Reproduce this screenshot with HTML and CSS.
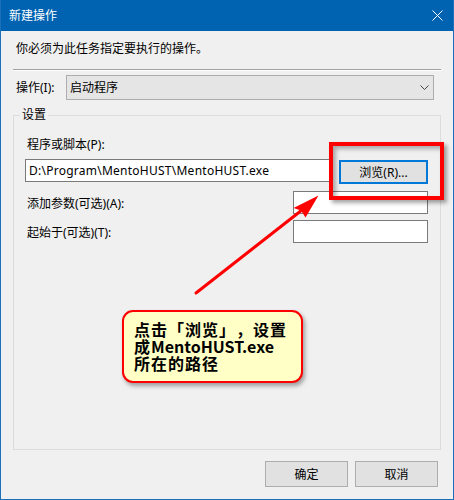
FILE: index.html
```html
<!DOCTYPE html>
<html lang="zh-CN">
<head>
<meta charset="utf-8">
<title>新建操作</title>
<link rel="stylesheet" href="styles.css">
</head>
<body>
<div class="window">
  <div class="titlebar">
    <span class="title">新建操作</span>
    <svg class="close" width="11" height="11" viewBox="0 0 11 11"><path d="M0.5 0.5L10.5 10.5M10.5 0.5L0.5 10.5" stroke="#fff" stroke-width="1" fill="none"/></svg>
  </div>
  <div class="content">
    <p class="desc">你必须为此任务指定要执行的操作。</p>
    <div class="sep"></div>
    <div class="action-row">
      <span class="action-label">操作(I):</span>
      <div class="combo">
        <span>启动程序</span>
        <svg class="chev" width="9" height="5" viewBox="0 0 9 5"><path d="M0.5 0.5L4.5 4.5L8.5 0.5" stroke="#444" stroke-width="1" fill="none"/></svg>
      </div>
    </div>
    <div class="group">
      <div class="legend">设置</div>
      <div class="field-label">程序或脚本(P):</div>
      <div class="program-row">
        <div class="input path">D:\Program\MentoHUST\MentoHUST.exe</div>
        <div class="btn browse">浏览(R)...</div>
      </div>
      <div class="opt-row">
        <span class="opt-label">添加参数(可选)(A):</span>
        <div class="input small"></div>
      </div>
      <div class="opt-row second">
        <span class="opt-label">起始于(可选)(T):</span>
        <div class="input small"></div>
      </div>
    </div>
    <div class="footer">
      <div class="btn action">确定</div>
      <div class="btn action">取消</div>
    </div>
  </div>
  <svg class="arrow" width="454" height="500" viewBox="0 0 454 500">
    <line x1="196" y1="293" x2="302" y2="210" stroke="#ff0000" stroke-width="3" stroke-linecap="round"/>
    <path d="M318.5 195.5L293.5 208L301 210.5L305.5 217.5Z" fill="#ff0000"/>
  </svg>
  <div class="highlight"></div>
  <div class="callout">点击「浏览」，设置<br>成<span class="latin">MentoHUST.exe</span><br>所在的路径</div>
</div>
</body>
</html>
```
FILE: styles.css
```css
* { box-sizing: border-box; }
html, body { margin: 0; padding: 0; }
body {
  background: #f0f0f0;
  font-family: "Noto Sans", "Noto Sans CJK SC", sans-serif;
  font-size: 12px;
  color: #000;
}
.window {
  position: relative;
  width: 454px;
  height: 500px;
  border: 1px solid #1e6fba;
  border-top: none;
  background: #f0f0f0;
  overflow: hidden;
}
.titlebar {
  height: 31px;
  background: #0063b1;
  color: #fff;
  display: flex;
  align-items: center;
  justify-content: space-between;
  margin: 0 -1px;
  padding: 0 11px 0 9px;
}
.title { line-height: 16px; }
.close { display: block; }
.desc {
  margin: 0;
  padding: 10px 0 0 15px;
  line-height: 16px;
}
.sep {
  margin: 12px 12px 0;
  height: 2px;
  border-top: 1px solid #a0a0a0;
  border-bottom: 1px solid #ffffff;
}
.action-row {
  display: flex;
  align-items: center;
  margin: 4px 19px 0 15px;
}
.action-label { width: 50px; line-height: 16px; }
.combo {
  flex: 1;
  height: 25px;
  background: #e5e5e5;
  border: 1px solid #adadad;
  display: flex;
  align-items: center;
  justify-content: space-between;
  padding: 0 4px 0 3px;
  line-height: 16px;
}
.chev { display: block; }
.group {
  margin: 15px 12px 0;
  height: 335px;
  border: 1px solid #dcdcdc;
  padding: 0 12px 0 11px;
}
.legend {
  width: max-content;
  margin: -8px 0 0 -5px;
  padding: 0 2px;
  line-height: 14px;
  background: #f0f0f0;
}
.field-label {
  margin-top: 15px;
  padding-left: 2px;
  line-height: 16px;
}
.program-row {
  display: flex;
  align-items: flex-start;
  margin-top: 6px;
}
.input {
  height: 23px;
  background: #fff;
  border: 1px solid #7a7a7a;
  line-height: 21px;
  padding-left: 3px;
  white-space: nowrap;
  overflow: hidden;
}
.path { width: 307px; letter-spacing: 0.25px; }
.btn {
  background: #e1e1e1;
  border: 1px solid #adadad;
  display: flex;
  align-items: center;
  justify-content: center;
}
.browse {
  margin-left: auto;
  margin-top: 1px;
  width: 89px;
  height: 24px;
  border: 2px solid #0078d7;
}
.opt-row {
  display: flex;
  align-items: center;
  justify-content: space-between;
  margin-top: 7px;
}
.opt-row.second { margin-top: 6px; }
.opt-label { padding-left: 2px; padding-top: 3px; line-height: 16px; }
.small { width: 135px; }
.footer {
  display: flex;
  justify-content: flex-end;
  gap: 7px;
  margin: 11px 15px 0 0;
}
.action { width: 83px; height: 26px; }
.arrow {
  position: absolute;
  left: -1px;
  top: 0;
  pointer-events: none;
}
.highlight {
  position: absolute;
  left: 328px;
  top: 142px;
  width: 115px;
  height: 58px;
  border: 4px solid #ff0000;
  box-shadow: 3px 3px 4px rgba(0,0,0,0.35), inset 3px 3px 4px rgba(0,0,0,0.3);
}
.callout {
  position: absolute;
  left: 121px;
  top: 310px;
  width: 181px;
  height: 73px;
  border: 2px solid #ff0000;
  border-radius: 11px;
  background: #ffffc6;
  box-shadow: 2px 3px 4px rgba(0,0,0,0.35);
  padding: 9px 0 0 10px;
  font-family: "Noto Sans CJK SC", sans-serif;
  font-weight: bold;
  font-size: 16px;
  line-height: 17px;
  letter-spacing: 1px;
  text-spacing-trim: space-all;
  font-feature-settings: "halt" 0;
}
.latin { letter-spacing: 0; }
```
